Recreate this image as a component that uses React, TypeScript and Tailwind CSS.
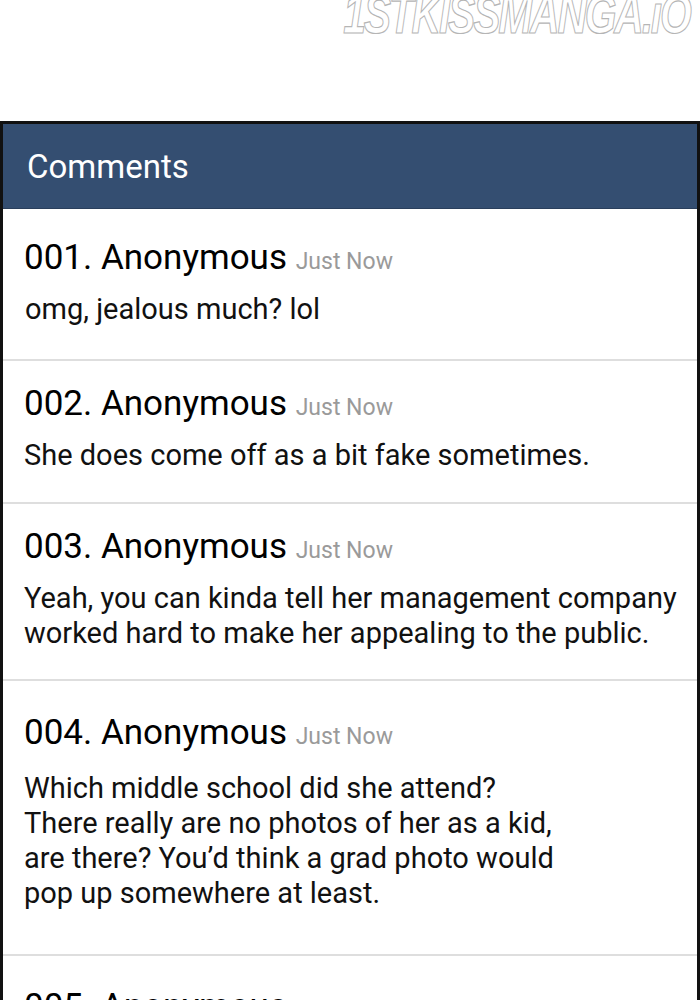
import React from "react";

type C = { n: string; lines: string[]; pt: string; gap: string; pb: string; indent?: string };

const comments: C[] = [
  { n: "001", lines: ["omg, jealous much? lol"], pt: "pt-[29px]", gap: "mt-[14px]", pb: "pb-[32px]", indent: "pl-px" },
  { n: "002", lines: ["She does come off as a bit fake sometimes."], pt: "pt-[23px]", gap: "mt-[14px]", pb: "pb-[29px]" },
  { n: "003", lines: ["Yeah, you can kinda tell her management company", "worked hard to make her appealing to the public."], pt: "pt-[23px]", gap: "mt-[14px]", pb: "pb-[28px]" },
  { n: "004", lines: ["Which middle school did she attend?", "There really are no photos of her as a kid,", "are there? You\u2019d think a grad photo would", "pop up somewhere at least."], pt: "pt-[32px]", gap: "mt-[18px]", pb: "pb-[43px]" },
  { n: "005", lines: [], pt: "pt-[31px]", gap: "mt-[16px]", pb: "pb-[45px]" },
];

export default function App() {
  return (
    <div className="w-[700px] h-[1000px] overflow-hidden bg-white" style={{ fontFamily: "Roboto, 'Noto Sans', sans-serif" }}>
      <div className="h-[121px] relative">
        <div
          className="absolute right-[10px] top-[-14px] text-[56px] italic font-bold tracking-[-3px] text-transparent [-webkit-text-stroke:1.2px_#b5b5b5] leading-none origin-right scale-x-[0.73] whitespace-nowrap"
          style={{ fontFamily: "'Liberation Sans', Arial, sans-serif" }}
        >
          1STKISSMANGA.iO
        </div>
      </div>
      <div className="border-t-[3px] border-l-[3px] border-r-[3px] border-[#111]">
        <div className="h-[85px] bg-[#344e71] border-b border-[#2a3f5c] flex items-center pl-[24px]">
          <span className="text-white text-[33px] leading-none">Comments</span>
        </div>
        {comments.map((c) => (
          <div key={c.n} className={`border-b-2 border-[#dedede] pl-[21px] ${c.pt} ${c.pb}`}>
            <div className="text-[35px] leading-[40px] text-black whitespace-nowrap">
              {c.n}. Anonymous{" "}
              <span className="text-[23px] leading-none text-[#9a9a9a]">Just Now</span>
            </div>
            {c.lines.length > 0 && (
              <div className={`${c.gap} ${c.indent ?? ""} text-[29px] leading-[35px] text-[#111] whitespace-nowrap`}>
                {c.lines.map((l, i) => (
                  <div key={i}>{l}</div>
                ))}
              </div>
            )}
          </div>
        ))}
      </div>
    </div>
  );
}
